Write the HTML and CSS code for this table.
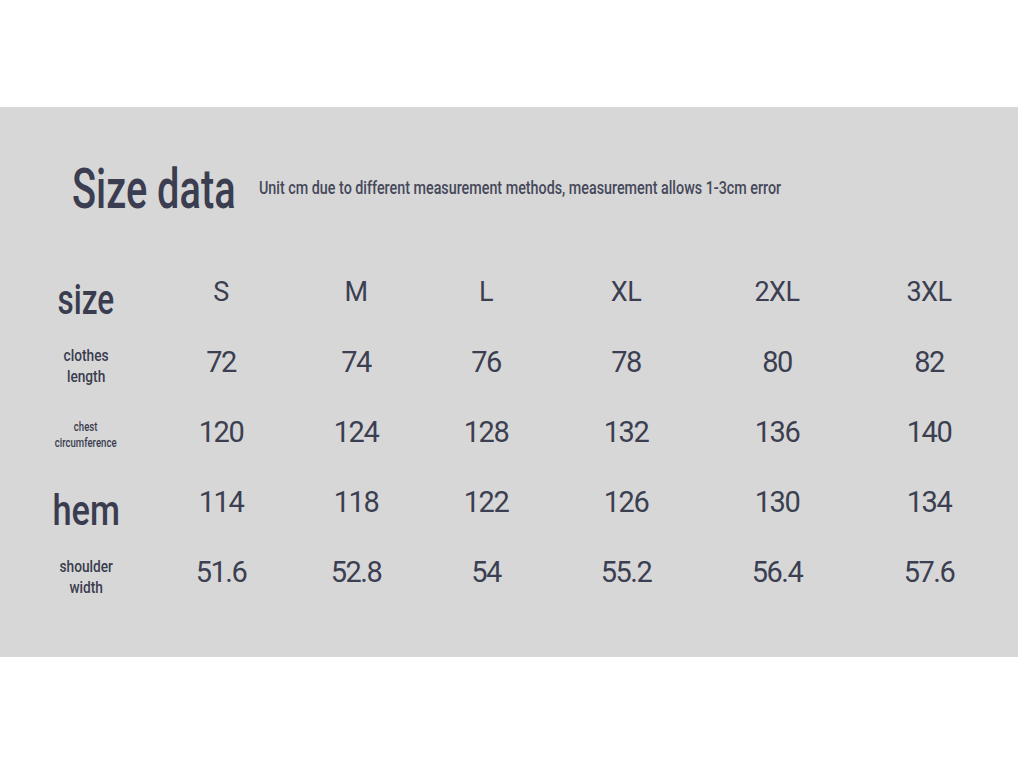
FILE: index.html
```html
<!DOCTYPE html>
<html lang="en">
<head>
<meta charset="utf-8">
<title>Size data</title>
<link rel="stylesheet" href="styles.css">
</head>
<body>
<main class="panel">
  <header class="title-row">
    <h1 class="title"><span class="squeeze title-text">Size data</span></h1>
    <p class="subtitle"><span class="squeeze sub-text">Unit cm due to different measurement methods, measurement allows 1-3cm error</span></p>
  </header>
  <div class="table">
    <div class="label label-xl"><span class="squeeze">size</span></div>
    <div class="head">S</div>
    <div class="head">M</div>
    <div class="head">L</div>
    <div class="head">XL</div>
    <div class="head">2XL</div>
    <div class="head">3XL</div>

    <div class="label label-md"><span class="squeeze">clothes<br>length</span></div>
    <div class="num">72</div>
    <div class="num">74</div>
    <div class="num">76</div>
    <div class="num">78</div>
    <div class="num">80</div>
    <div class="num">82</div>

    <div class="label label-sm"><span class="squeeze">chest<br>circumference</span></div>
    <div class="num">120</div>
    <div class="num">124</div>
    <div class="num">128</div>
    <div class="num">132</div>
    <div class="num">136</div>
    <div class="num">140</div>

    <div class="label label-xxl"><span class="squeeze">hem</span></div>
    <div class="num">114</div>
    <div class="num">118</div>
    <div class="num">122</div>
    <div class="num">126</div>
    <div class="num">130</div>
    <div class="num">134</div>

    <div class="label label-md label-last"><span class="squeeze">shoulder<br>width</span></div>
    <div class="num">51.6</div>
    <div class="num">52.8</div>
    <div class="num">54</div>
    <div class="num">55.2</div>
    <div class="num">56.4</div>
    <div class="num">57.6</div>
  </div>
</main>
</body>
</html>
```
FILE: styles.css
```css
html, body {
  margin: 0;
  padding: 0;
  background: #ffffff;
}

body {
  padding-top: 107px;
  height: 764px;
  box-sizing: border-box;
}

.panel {
  background: #d7d7d7;
  height: 550px;
  color: #3a3d4f;
  box-sizing: border-box;
  padding-top: 52px;
}

.squeeze {
  display: inline-block;
  white-space: nowrap;
  transform-origin: center;
}

.title-row {
  display: flex;
  align-items: flex-start;
  padding-left: 72px;
  gap: 24px;
}

.title {
  margin: 0;
  width: 163px;
  font-family: Roboto, "Liberation Sans", sans-serif;
  font-weight: 500;
  font-size: 56px;
  line-height: 60px;
  color: #3b3d50;
}

.title-text {
  transform-origin: left;
  transform: scaleX(0.71);
}

.subtitle {
  margin: 17px 0 0;
  font-family: Roboto, "Liberation Sans", sans-serif;
  font-size: 18px;
  line-height: 24px;
  font-weight: 500;
  color: #45485a;
}

.sub-text {
  transform-origin: left;
  transform: scaleX(0.795);
}

.table {
  display: grid;
  grid-template-columns: 135px 135px 135px 125px 155px 147px 157px;
  grid-auto-rows: 70px;
  padding-left: 18.5px;
  margin-top: 38px;
  align-items: center;
  justify-items: center;
}

.label {
  font-family: Roboto, "Liberation Sans", sans-serif;
  text-align: center;
  color: #3a3d4f;
}

.label-xl {
  font-size: 42px;
  font-weight: 500;
  padding-top: 14px;
}

.label-xl .squeeze {
  transform: scaleX(0.75);
}

.label-xxl {
  font-size: 43px;
  font-weight: 500;
  padding-top: 16px;
}

.label-xxl .squeeze {
  transform: scaleX(0.8);
}

.label-md {
  font-size: 16.5px;
  line-height: 21px;
  font-weight: 500;
  padding-top: 8px;
}

.label-md .squeeze {
  transform: scaleX(0.83);
}

.label-last {
  padding-top: 10px;
}

.label-sm {
  font-size: 12px;
  line-height: 16px;
  font-weight: 500;
  padding-top: 6px;
}

.label-sm .squeeze {
  transform: scaleX(0.8);
}

.head, .num {
  font-family: Roboto, "Liberation Sans", sans-serif;
  color: #3b3f51;
}

.head {
  font-size: 27px;
  letter-spacing: -0.5px;
}

.num {
  font-size: 29px;
  letter-spacing: -1.5px;
}
```
